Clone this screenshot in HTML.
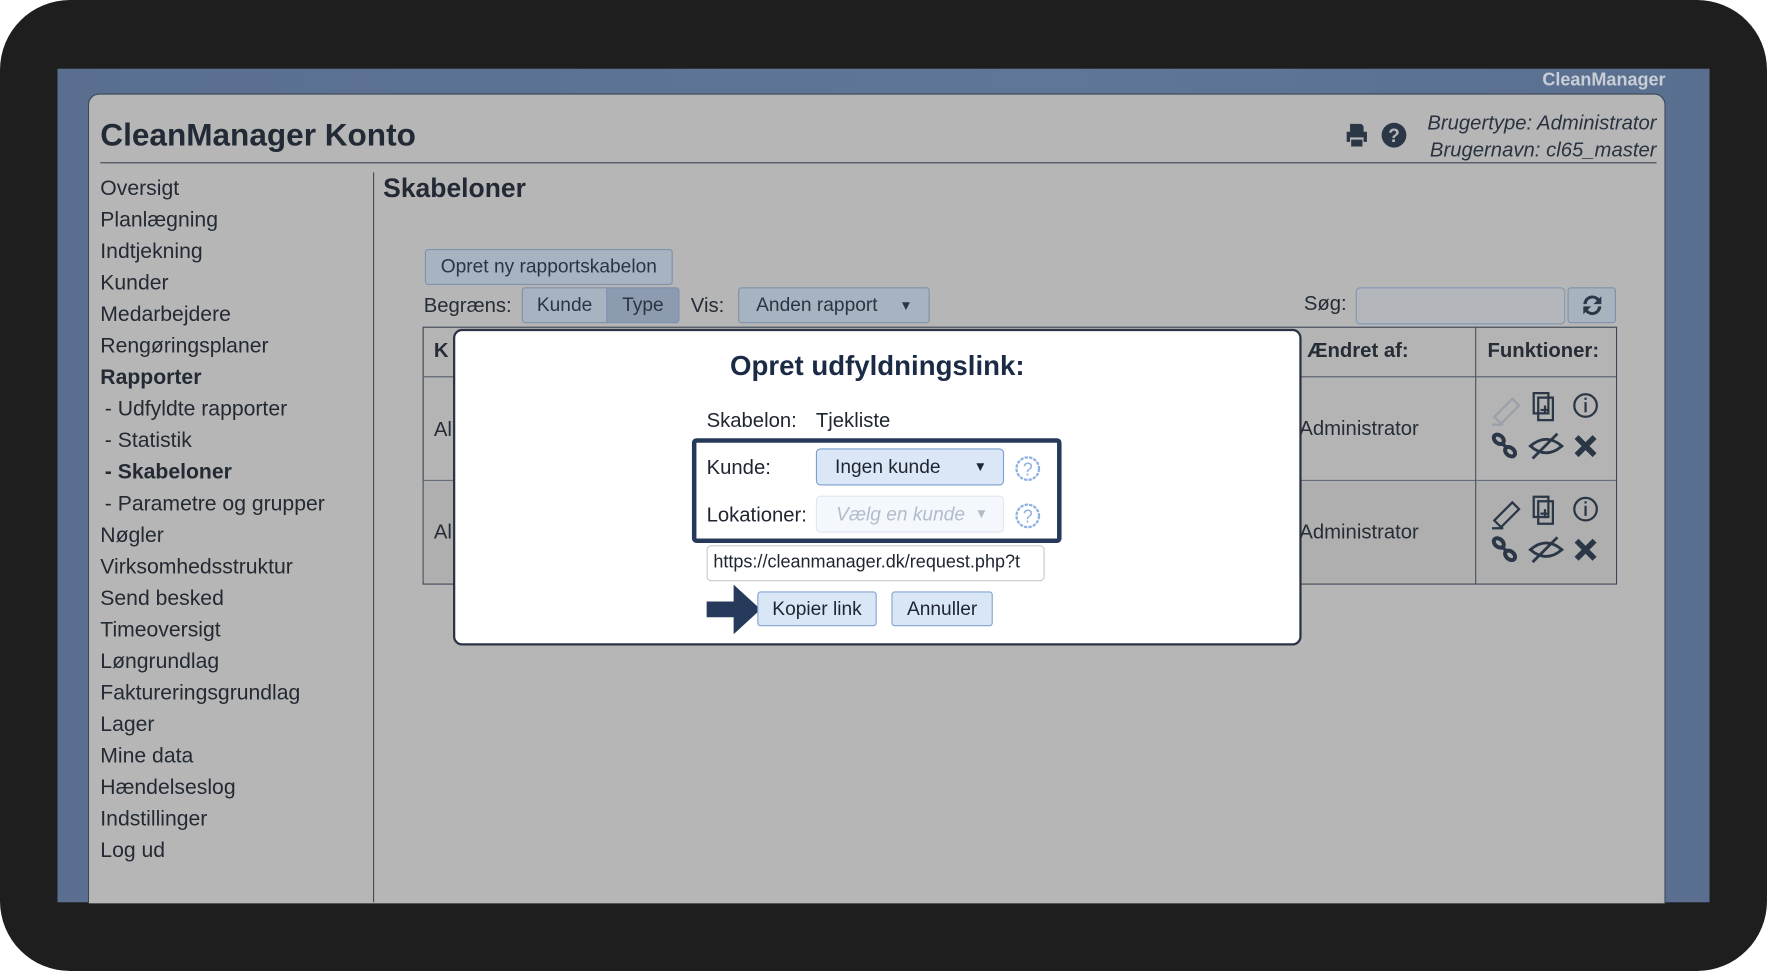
<!DOCTYPE html>
<html><head><meta charset="utf-8"><style>
html,body{margin:0;padding:0;background:#fff;width:1767px;height:971px;overflow:hidden;font-family:"Liberation Sans",sans-serif;}
#s{position:absolute;left:0;top:0;width:1568px;height:862px;transform-origin:0 0;transform:scale(1.12691,1.12645);}
.a{position:absolute;}
.frame{left:0;top:0;width:1568px;height:862px;background:#1e1e1e;border-radius:62px;}
.blue{left:51px;top:61px;width:1466px;height:740px;background:linear-gradient(90deg,#5a6f8f,#5f7696 60%,#5a6f8f);}
.panel{left:78px;top:83px;width:1398px;height:718px;background:#b6b6b6;border:1px solid #3a4658;border-bottom:none;border-radius:10px 10px 0 0;}
.side div{position:absolute;left:89px;font-size:18.8px;color:#232a33;white-space:nowrap;}
.btn{position:absolute;background:#a8b3c1;border:1px solid #7f92ab;border-radius:3px;font-size:17px;color:#2b3442;text-align:center;box-sizing:border-box;}
.t{position:absolute;font-size:18px;color:#262d36;white-space:nowrap;}
.ic{position:absolute;}
</style></head><body><div id="s">
<div class="a frame"></div>
<div class="a blue"></div>
<div class="a" style="left:1300px;width:178px;text-align:right;top:63px;font-size:16px;font-weight:bold;color:#c9ced6;">CleanManager</div>
<div class="a panel"></div>
<div class="a" style="left:89px;top:104px;font-size:28px;font-weight:bold;color:#222a36;">CleanManager Konto</div>
<div class="a" style="left:89px;top:144px;width:1381px;height:1px;background:#3c4656;"></div>
<svg class="ic" style="left:1192px;top:108px" width="24" height="24" viewBox="0 0 24 24"><path d="M6 2h10l2 2v5H6z M3 9h18v9h-3v-4H6v4H3z M7 16h10v6H7z" fill="#2b3747"/></svg>
<svg class="ic" style="left:1225px;top:108px" width="24" height="24" viewBox="0 0 24 24"><circle cx="12" cy="12" r="11" fill="#2b3747"/><text x="12" y="18" text-anchor="middle" font-size="17" font-weight="bold" fill="#b6b6b6" font-family="Liberation Sans">?</text></svg>
<div class="a" style="left:1000px;top:97px;width:470px;text-align:right;font-style:italic;font-size:18px;color:#2a3340;line-height:24px;">Brugertype: Administrator<br>Brugernavn: cl65_master</div>
<div class="side">
<div style="top:156px">Oversigt</div><div style="top:184px">Planlægning</div><div style="top:212px">Indtjekning</div><div style="top:240px">Kunder</div><div style="top:268px">Medarbejdere</div><div style="top:296px">Rengøringsplaner</div><div style="top:324px;font-weight:bold">Rapporter</div><div style="top:352px;left:93px">- Udfyldte rapporter</div><div style="top:380px;left:93px">- Statistik</div><div style="top:408px;left:93px;font-weight:bold">- Skabeloner</div><div style="top:436px;left:93px">- Parametre og grupper</div><div style="top:464px">Nøgler</div><div style="top:492px">Virksomhedsstruktur</div><div style="top:520px">Send besked</div><div style="top:548px">Timeoversigt</div><div style="top:576px">Løngrundlag</div><div style="top:604px">Faktureringsgrundlag</div><div style="top:632px">Lager</div><div style="top:660px">Mine data</div><div style="top:688px">Hændelseslog</div><div style="top:716px">Indstillinger</div><div style="top:744px">Log ud</div>
</div>
<div class="a" style="left:331px;top:153px;width:1px;height:648px;background:#444d5a;"></div>
<div class="a" style="left:340px;top:154px;font-size:23.5px;font-weight:bold;color:#232a35;">Skabeloner</div>
<div class="btn" style="left:377px;top:221px;width:220px;height:32px;line-height:30px;">Opret ny rapportskabelon</div>
<div class="t" style="left:376px;top:261px;">Begræns:</div>
<div class="btn" style="left:463px;top:255px;width:76px;height:32px;line-height:30px;border-radius:3px 0 0 3px;">Kunde</div>
<div class="btn" style="left:538px;top:255px;width:65px;height:32px;line-height:30px;background:#8c9bb0;border-radius:0 3px 3px 0;">Type</div>
<div class="t" style="left:613px;top:261px;">Vis:</div>
<div class="btn" style="left:655px;top:255px;width:170px;height:32px;line-height:30px;text-align:left;padding-left:15px;">Anden rapport <span style="position:absolute;left:142px;top:0;font-size:12px">▼</span></div>
<div class="t" style="left:1157px;top:259px;">Søg:</div>
<div class="a" style="left:1203px;top:255px;width:184px;height:31px;border:1px solid #8198b5;border-radius:4px;background:#b3b6ba;"></div>
<div class="btn" style="left:1391px;top:255px;width:43px;height:32px;background:#a9b3bf;"><svg width="24" height="24" viewBox="0 0 24 24" style="margin-top:3px"><path d="M4 11a8 8 0 0 1 14-5l2-2v7h-7l3-3a5 5 0 0 0-9 3z M20 13a8 8 0 0 1-14 5l-2 2v-7h7l-3 3a5 5 0 0 0 9-3z" fill="#2b3747"/></svg></div>
<!-- table -->
<div class="a" style="left:375px;top:290px;width:1058px;height:227px;border:1px solid #3e4756;background:#b4b4b4;"></div>
<div class="a" style="left:376px;top:334px;width:1058px;height:1px;background:#555e6b;"></div>
<div class="a" style="left:376px;top:426px;width:1058px;height:1px;background:#666e7a;"></div>
<div class="a" style="left:376px;top:427px;width:1058px;height:90px;background:#afafaf;"></div>
<div class="a" style="left:1309px;top:290px;width:1px;height:228px;background:#4a5260;"></div>
<div class="t" style="left:385px;top:301px;font-weight:bold;">K</div>
<div class="t" style="left:385px;top:371px;">Al</div><div class="t" style="left:385px;top:462px;">Al</div>
<div class="t" style="left:1160px;top:301px;font-weight:bold;">Ændret af:</div>
<div class="t" style="left:1320px;top:301px;font-weight:bold;">Funktioner:</div>
<div class="t" style="left:1153px;top:370px;">Administrator</div><div class="t" style="left:1153px;top:462px;">Administrator</div>
<svg class="ic" style="left:1320px;top:345px" width="105" height="68" viewBox="0 0 105 68">
<path d="M6 25 L22 9 L28 15 L12 31 Z M4 32h10" stroke="#9aa0a8" stroke-width="2" fill="none"/>
<path d="M41 4h13v18H41z M45 8h13v20H45z" stroke="#2b3747" stroke-width="2" fill="#b4b4b4"/><path d="M51 15v8M47 19h8" stroke="#2b3747" stroke-width="2"/>
<circle cx="87" cy="15" r="10" stroke="#2b3747" stroke-width="2" fill="none"/><path d="M87 12v9M87 8v2" stroke="#2b3747" stroke-width="2"/>
<ellipse cx="10" cy="45" rx="5" ry="3.5" transform="rotate(40 10 45)" stroke="#2b3747" stroke-width="3.5" fill="none"/><ellipse cx="20" cy="56" rx="5" ry="3.5" transform="rotate(40 20 56)" stroke="#2b3747" stroke-width="3.5" fill="none"/><path d="M12 48l6 5" stroke="#2b3747" stroke-width="3"/>
<path d="M38 51q14-12 28 0q-14 12-28 0z" stroke="#2b3747" stroke-width="2.5" fill="none"/><path d="M40 62L62 40" stroke="#2b3747" stroke-width="2.5"/>
<path d="M79 43l16 16M95 43l-16 16" stroke="#2b3747" stroke-width="5"/>
</svg>
<svg class="ic" style="left:1320px;top:437px" width="105" height="68" viewBox="0 0 105 68">
<path d="M6 25 L22 9 L28 15 L12 31 Z M4 32h10" stroke="#2b3747" stroke-width="2" fill="none"/>
<path d="M41 4h13v18H41z M45 8h13v20H45z" stroke="#2b3747" stroke-width="2" fill="#afafaf"/><path d="M51 15v8M47 19h8" stroke="#2b3747" stroke-width="2"/>
<circle cx="87" cy="15" r="10" stroke="#2b3747" stroke-width="2" fill="none"/><path d="M87 12v9M87 8v2" stroke="#2b3747" stroke-width="2"/>
<ellipse cx="10" cy="45" rx="5" ry="3.5" transform="rotate(40 10 45)" stroke="#2b3747" stroke-width="3.5" fill="none"/><ellipse cx="20" cy="56" rx="5" ry="3.5" transform="rotate(40 20 56)" stroke="#2b3747" stroke-width="3.5" fill="none"/><path d="M12 48l6 5" stroke="#2b3747" stroke-width="3"/>
<path d="M38 51q14-12 28 0q-14 12-28 0z" stroke="#2b3747" stroke-width="2.5" fill="none"/><path d="M40 62L62 40" stroke="#2b3747" stroke-width="2.5"/>
<path d="M79 43l16 16M95 43l-16 16" stroke="#2b3747" stroke-width="5"/>
</svg>
<!-- modal -->
<div class="a" style="left:402px;top:292px;width:749px;height:277px;background:#fff;border:2px solid #2a3345;border-radius:8px;"></div>
<div class="a" style="left:402px;top:312px;width:753px;text-align:center;font-size:24.5px;font-weight:bold;color:#1b2a45;">Opret udfyldningslink:</div>
<div class="t" style="left:627px;top:363px;color:#1e2530;">Skabelon:</div>
<div class="t" style="left:724px;top:363px;color:#1e2530;">Tjekliste</div>
<div class="a" style="left:614px;top:389px;width:320px;height:85px;border:4px solid #253a5a;border-radius:4px;"></div>
<div class="t" style="left:627px;top:405px;color:#1e2530;">Kunde:</div>
<div class="a" style="left:724px;top:398px;width:165px;height:31px;background:#dbe7f6;border:1px solid #7b9fcf;border-radius:4px;font-size:17px;color:#1e2530;line-height:31px;"><span style="margin-left:16px">Ingen kunde</span><span style="position:absolute;left:139px;font-size:12px">▼</span></div>
<div class="t" style="left:627px;top:447px;color:#1e2530;">Lokationer:</div>
<div class="a" style="left:724px;top:440px;width:165px;height:31px;background:#f4f7fb;border:1px solid #dfe7f2;border-radius:4px;font-size:17px;color:#b2bccb;line-height:31px;font-style:italic;"><span style="margin-left:17px">Vælg en kunde</span><span style="position:absolute;left:140px;font-size:12px;font-style:normal">▼</span></div>
<svg class="ic" style="left:900px;top:404px" width="24" height="24"><circle cx="12" cy="12" r="10" stroke="#8fb0e3" stroke-width="2" fill="none" stroke-dasharray="3 1"/><text x="12" y="18" text-anchor="middle" font-size="16" fill="#8fb0e3" font-family="Liberation Sans">?</text></svg>
<svg class="ic" style="left:900px;top:446px" width="24" height="24"><circle cx="12" cy="12" r="10" stroke="#8fb0e3" stroke-width="2" fill="none" stroke-dasharray="3 1"/><text x="12" y="18" text-anchor="middle" font-size="16" fill="#8fb0e3" font-family="Liberation Sans">?</text></svg>
<div class="a" style="left:627px;top:484px;width:298px;height:30px;border:1px solid #c9c9c9;border-radius:4px;overflow:hidden;font-size:16px;line-height:30px;color:#1e2530;white-space:nowrap;"><span style="margin-left:5px">https://cleanmanager.dk/request.php?t</span></div>
<svg class="ic" style="left:627px;top:519px" width="50" height="44"><path d="M0 15h24V0l24 22-24 22V29H0z" fill="#263b5c"/></svg>
<div class="btn" style="left:672px;top:525px;width:106px;height:31px;line-height:30px;background:#d8e6f6;border-color:#84a5d2;color:#1e2530;">Kopier link</div>
<div class="btn" style="left:791px;top:525px;width:90px;height:31px;line-height:30px;background:#d8e6f6;border-color:#84a5d2;color:#1e2530;">Annuller</div>
</div></body></html>
